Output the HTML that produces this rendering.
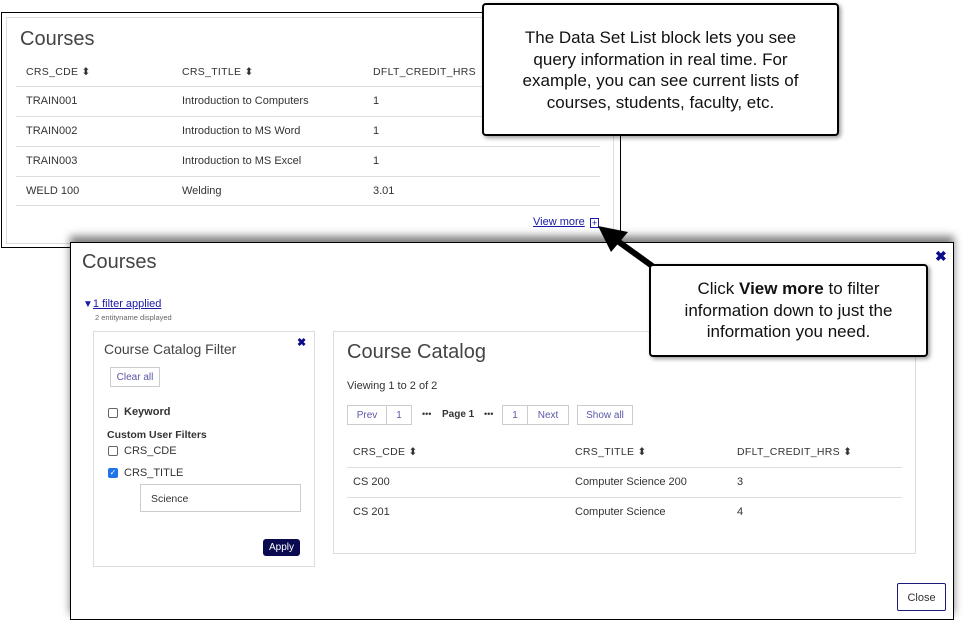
<!DOCTYPE html>
<html><head><meta charset="utf-8"><style>
*{box-sizing:border-box;margin:0;padding:0}
body{width:963px;height:620px;background:#fff;position:relative;overflow:hidden;font-family:"Liberation Sans",Arial,sans-serif;color:#222}
.a{position:absolute;white-space:nowrap}
.t{font-size:11px;color:#333}
.ln{position:absolute;height:1px;background:#ddd}
.cb{position:absolute;width:10px;height:10px;border:1px solid #666;border-radius:2px;background:#fff}
.pb{position:absolute;top:405px;height:20px;border:1px solid #ccc;font-size:10px;color:#5b57a6;text-align:center;line-height:20px}
</style></head><body>
<div class="a" style="left:1px;top:12px;width:620px;height:236px;border:1px solid #000"></div>
<div class="a" style="left:6px;top:17px;width:608px;height:227px;border:1px solid #ddd"></div>
<div class="a" style="left:20px;top:28px;font-size:20px;color:#444">Courses</div>
<div class="a t" style="left:26px;top:66px;font-size:10.5px;letter-spacing:.3px">CRS_CDE ⬍</div>
<div class="a t" style="left:182px;top:66px;font-size:10.5px;letter-spacing:.3px">CRS_TITLE ⬍</div>
<div class="a t" style="left:373px;top:66px;font-size:10.5px;letter-spacing:.3px">DFLT_CREDIT_HRS</div>
<div class="ln" style="left:16px;top:86px;width:584px"></div>
<div class="a t" style="left:26px;top:95px">TRAIN001</div><div class="a t" style="left:182px;top:95px">Introduction to Computers</div><div class="a t" style="left:373px;top:95px">1</div>
<div class="ln" style="left:16px;top:116px;width:584px"></div>
<div class="a t" style="left:26px;top:125px">TRAIN002</div><div class="a t" style="left:182px;top:125px">Introduction to MS Word</div><div class="a t" style="left:373px;top:125px">1</div>
<div class="ln" style="left:16px;top:146px;width:584px"></div>
<div class="a t" style="left:26px;top:155px">TRAIN003</div><div class="a t" style="left:182px;top:155px">Introduction to MS Excel</div><div class="a t" style="left:373px;top:155px">1</div>
<div class="ln" style="left:16px;top:176px;width:584px"></div>
<div class="a t" style="left:26px;top:185px">WELD 100</div><div class="a t" style="left:182px;top:185px">Welding</div><div class="a t" style="left:373px;top:185px">3.01</div>
<div class="ln" style="left:16px;top:205px;width:584px"></div>
<div class="a" style="left:533px;top:216px;font-size:11px;color:#1a1aa6;text-decoration:underline">View more</div>
<div class="a" style="left:590px;top:218px;width:9px;height:10px;border:1px solid #1a1aa6;font-size:9px;line-height:8px;text-align:center;color:#1a1aa6">+</div>

<div class="a" style="left:70px;top:242px;width:884px;height:378px;border:1px solid #000;box-shadow:0 -6px 8px rgba(0,0,0,.5)"></div>
<div class="a" style="left:71px;top:243px;width:882px;height:376px;background:#fff"></div>
<div class="a" style="left:82px;top:251px;font-size:20px;color:#444">Courses</div>
<div class="a" style="left:935px;top:248px;font-size:14px;color:#0a0a8a;font-weight:bold">✖</div>
<div class="a" style="left:83px;top:298px;font-size:11px;color:#1a1aa6"><span style="font-size:10px">▼</span><u>1 filter applied</u></div>
<div class="a" style="left:95px;top:313px;font-size:7.5px;color:#666">2 entityname displayed</div>

<div class="a" style="left:93px;top:331px;width:222px;height:236px;border:1px solid #ddd"></div>
<div class="a" style="left:104px;top:341px;font-size:14px;color:#444">Course Catalog Filter</div>
<div class="a" style="left:297px;top:336px;font-size:11px;color:#0a0a8a;font-weight:bold">✖</div>
<div class="a" style="left:110px;top:367px;width:50px;height:20px;border:1px solid #ccc;font-size:10px;color:#5b57a6;text-align:center;line-height:20px">Clear all</div>
<div class="cb" style="left:108px;top:408px"></div><div class="a" style="left:124px;top:406px;font-size:11px;font-weight:bold;color:#333">Keyword</div>
<div class="a" style="left:107px;top:429px;font-size:10.5px;font-weight:bold;color:#333">Custom User Filters</div>
<div class="cb" style="left:108px;top:446px"></div><div class="a" style="left:124px;top:445px;font-size:11px;color:#333">CRS_CDE</div>
<div class="cb" style="left:108px;top:468px;background:#1e74e8;border-color:#1e74e8;color:#fff;font-size:8px;line-height:8px;text-align:center">✓</div><div class="a" style="left:124px;top:467px;font-size:11px;color:#333">CRS_TITLE</div>
<div class="a" style="left:140px;top:484px;width:161px;height:28px;border:1px solid #ccc;font-size:10.5px;color:#333;padding:8px 10px">Science</div>
<div class="a" style="left:263px;top:539px;width:37px;height:17px;background:#0a0a50;border-radius:3px;color:#fff;font-size:10px;text-align:center;line-height:17px">Apply</div>

<div class="a" style="left:333px;top:331px;width:583px;height:223px;border:1px solid #ddd"></div>
<div class="a" style="left:347px;top:341px;font-size:20px;color:#444">Course Catalog</div>
<div class="a t" style="left:347px;top:380px">Viewing 1 to 2 of 2</div>
<div class="pb" style="left:347px;width:40px">Prev</div>
<div class="pb" style="left:386px;width:26px">1</div>
<div class="a" style="left:422px;top:409px;font-size:9px;color:#333">•••</div>
<div class="a" style="left:442px;top:409px;font-size:10px;font-weight:bold;color:#333">Page 1</div>
<div class="a" style="left:484px;top:409px;font-size:9px;color:#333">•••</div>
<div class="pb" style="left:502px;width:26px">1</div>
<div class="pb" style="left:527px;width:42px">Next</div>
<div class="pb" style="left:577px;width:56px">Show all</div>
<div class="a t" style="left:353px;top:446px;font-size:10.5px;letter-spacing:.3px">CRS_CDE ⬍</div>
<div class="a t" style="left:575px;top:446px;font-size:10.5px;letter-spacing:.3px">CRS_TITLE ⬍</div>
<div class="a t" style="left:737px;top:446px;font-size:10.5px;letter-spacing:.3px">DFLT_CREDIT_HRS ⬍</div>
<div class="ln" style="left:347px;top:467px;width:555px"></div>
<div class="a t" style="left:353px;top:476px">CS 200</div><div class="a t" style="left:575px;top:476px">Computer Science 200</div><div class="a t" style="left:737px;top:476px">3</div>
<div class="ln" style="left:347px;top:497px;width:555px"></div>
<div class="a t" style="left:353px;top:506px">CS 201</div><div class="a t" style="left:575px;top:506px">Computer Science</div><div class="a t" style="left:737px;top:506px">4</div>
<div class="a" style="left:897px;top:583px;width:49px;height:28px;border:1px solid #1a1a7a;border-radius:2px;font-size:11px;color:#333;text-align:center;line-height:28px">Close</div>

<svg class="a" style="left:0;top:0" width="963" height="620"><line x1="655" y1="268" x2="612" y2="237" stroke="#000" stroke-width="6"/><polygon points="598,226 628,232 611,252" fill="#000"/></svg>

<div class="a" style="left:482px;top:3px;width:357px;height:133px;border:2px solid #000;border-radius:4px;background:#fff;box-shadow:2px 2px 4px rgba(0,0,0,.4);font-size:17px;color:#111;text-align:center;line-height:21.7px;padding-top:22px;white-space:normal">The Data Set List block lets you see<br>query information in real time. For<br>example, you can see current lists of<br>courses, students, faculty, etc.</div>
<div class="a" style="left:649px;top:264px;width:279px;height:93px;border:2px solid #000;border-radius:4px;background:#fff;box-shadow:2px 2px 4px rgba(0,0,0,.4);font-size:17px;color:#111;text-align:center;line-height:21.7px;padding-top:12px;white-space:normal">Click <b>View more</b> to filter<br>information down to just the<br>information you need.</div>
</body></html>
